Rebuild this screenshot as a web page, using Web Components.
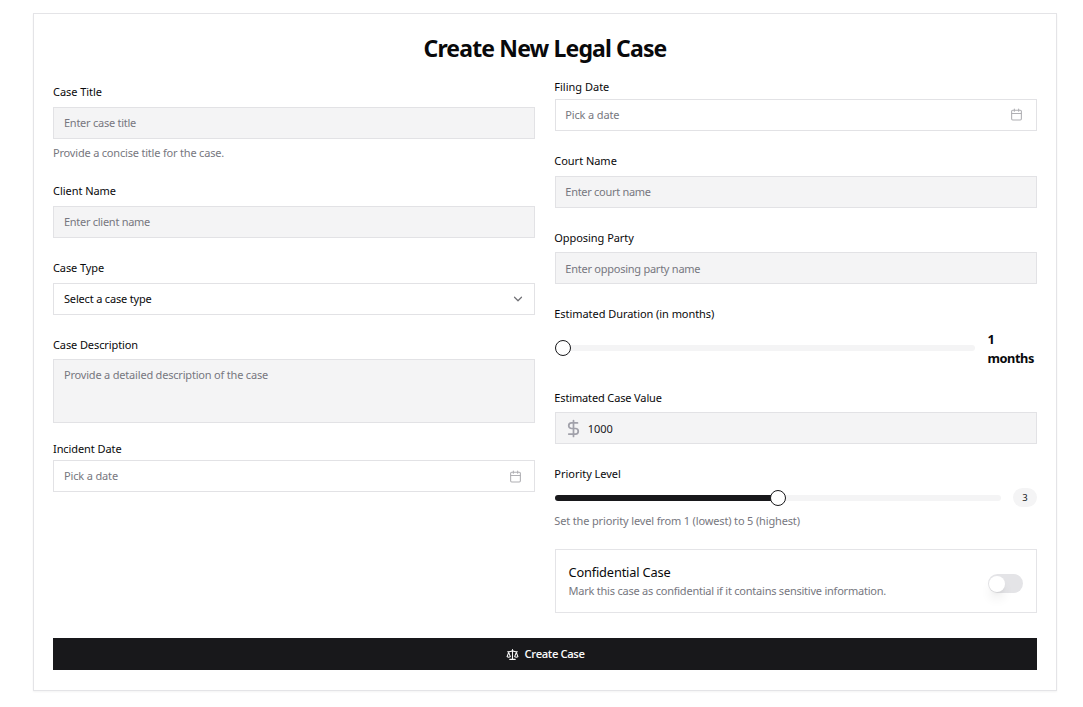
<!DOCTYPE html>
<html lang="en">
<head>
<meta charset="utf-8">
<title>Create New Legal Case</title>
<style>
html,body{margin:0;background:#fff}
body{font:11px/16px "Noto Sans","Open Sans",sans-serif;color:#09090b;height:707px;overflow:hidden}
</style>
</head>
<body>
<legal-case-page></legal-case-page>
<script>
const define=(name,html,setup)=>{
  const t=document.createElement('template');
  t.innerHTML=html;
  customElements.define(name,class extends HTMLElement{
    connectedCallback(){
      if(this.shadowRoot)return;
      this.attachShadow({mode:'open'}).append(t.content.cloneNode(true));
      if(setup)setup(this,this.shadowRoot);
    }
  });
};

/* One line of text, tracked to the advance width given in "w". */
define('fit-text',`<style>:host{display:inline-block;white-space:nowrap}span{display:inline-block}</style><span><slot></slot></span>`,(el,root)=>{
  const s=root.querySelector('span'),n=el.textContent.length;
  const w=s.getBoundingClientRect().width;
  s.style.letterSpacing=((+el.getAttribute('w')-w)/n).toFixed(4)+'px';
});

const paths={
  calendar:['<path d="M8 2v4M16 2v4"/><rect width="18" height="18" x="3" y="4" rx="2"/><path d="M3 10h18"/>',2],
  chevron:['<path d="m5 8.500 7 7 7-7"/>',2.4],
  dollar:['<path d="M12 2v20M17 5H9.500a3.500 3.500 0 0 0 0 7h5a3.500 3.500 0 0 1 0 7H6"/>',2.2],
  scale:['<path d="m16 16 3-8 3 8c-.87.65-1.920 1-3 1s-2.130-.35-3-1Z"/><path d="m2 16 3-8 3 8c-.87.65-1.920 1-3 1s-2.130-.35-3-1Z"/><path d="M7 21h10M12 3v18M3 7h2c2 0 5-1 7-2 2 1 5 2 7 2h2"/>',2]
};
define('ui-icon',`<style>:host{display:block;flex:none}svg{display:block;width:100%;height:100%}</style><svg viewBox="0 0 24 24" fill="none" stroke="currentColor" stroke-linecap="round" stroke-linejoin="round"></svg>`,(el,root)=>{
  const [d,w]=paths[el.getAttribute('name')],s=root.querySelector('svg');
  s.setAttribute('stroke-width',w);s.innerHTML=d;
});

define('form-field',`<style>
:host{display:block;margin-top:var(--top,22px)}
.label{height:16px;margin-bottom:var(--gap,7px);margin-left:var(--nudge,0px)}
.help{display:block;color:#777780;margin-left:var(--nudge,0px)}
::slotted([slot=help]){display:block!important;height:16px;margin-top:6px}
</style><div class="label"><slot name="label"></slot></div><slot></slot><div class="help"><slot name="help"></slot></div>`);

define('input-box',`<style>
:host{display:flex;align-items:center;justify-content:space-between;box-sizing:border-box;height:32px;border:1px solid #e2e2e5;padding:0 10px 0 calc(10px + var(--nudge,0px));background:#f4f4f5;color:#777780}
:host([plain]){background:#fff}
:host([dark]){color:#09090b}
:host([money]){justify-content:flex-start;gap:6px;color:#18181b}
:host([area]){height:64px;align-items:flex-start;padding-top:7px}
</style><slot></slot>`);

define('range-slider',`<style>
:host{display:flex;align-items:center;flex:1;height:16px}
.track{position:relative;flex:1;height:6px;border-radius:3px;background:#f4f4f5}
.fill{height:6px;border-radius:3px;background:#18181b;width:var(--at)}
.thumb{position:absolute;top:-5px;left:calc(var(--at) - var(--shift));width:16px;height:16px;box-sizing:border-box;border:1px solid #18181b;border-radius:50%;background:#fff}
</style><div class="track"><div class="fill"></div><div class="thumb"></div></div>`);

define('toggle-switch',`<style>
:host{display:flex;align-items:center;box-sizing:border-box;width:35px;height:19px;border-radius:10px;background:#e4e4e7;padding:1px}
i{width:16px;height:16px;border-radius:50%;background:#fff;box-shadow:0 8px 12px -2px #0000001a,0 3px 5px -3px #0000001a}
</style><i></i>`);

define('legal-case-page',`<style>
:host{display:block;padding:13px 26px 0 33px}
.card{box-sizing:border-box;width:1024px;height:678px;border:1px solid #e4e4e7;box-shadow:0 1px 2px #0000000d;padding:18px 19px 0;background:#fff}
h1{margin:0;height:32px;font:700 23px/33px "Noto Sans","Open Sans",sans-serif;text-align:center}
.cols{display:grid;grid-template-columns:482px 482px;gap:20px;margin-top:15px;height:534px}
.right{--nudge:-.7px}
.cal{width:13px;height:13px;color:#b0b0b4;margin-right:2px}
.right .cal{margin:0 3px 2px 0}
.chev{width:12px;height:12px;color:#707075}
.row{display:flex;align-items:center}
.months{width:49px;margin-left:13px;font:700 12.800px/19px "Noto Sans","Open Sans",sans-serif;padding-top:1px;margin-bottom:-1px}
.months fit-text{margin-left:-.5px}
.badge{display:flex;align-items:center;justify-content:center;width:24px;height:19px;margin-left:12px;border-radius:10px;background:#f4f4f5;font-size:9.500px;color:#18181b}
.conf{display:flex;align-items:center;justify-content:space-between;box-sizing:border-box;height:64px;margin-top:21px;border:1px solid #e4e4e7;padding:0 13px 0 12.500px}
.conf>div{display:grid}
.conf .t{font-size:12.800px;height:19px;line-height:18px}
.conf .d{color:#777780;height:17px;line-height:18px}
toggle-switch{margin-top:5px}
.btn{display:flex;align-items:center;justify-content:center;gap:6px;height:32px;margin-top:25px;background:#18181b;color:#fafafa;font:600 11.200px/16px "Open Sans",sans-serif}
</style>
<div class="card">
<h1><fit-text w="243">Create New Legal Case</fit-text></h1>
<div class="cols">
<div>
<form-field style="--top:5px"><fit-text slot="label" w="49">Case Title</fit-text><input-box><fit-text w="72">Enter case title</fit-text></input-box><fit-text slot="help" w="171">Provide a concise title for the case.</fit-text></form-field>
<form-field><fit-text slot="label" w="63">Client Name</fit-text><input-box><fit-text w="86">Enter client name</fit-text></input-box></form-field>
<form-field><fit-text slot="label" w="51">Case Type</fit-text><input-box plain dark><fit-text w="87.5">Select a case type</fit-text><ui-icon class="chev" name="chevron"></ui-icon></input-box></form-field>
<form-field style="--gap:6px"><fit-text slot="label" w="85">Case Description</fit-text><input-box area><fit-text w="204">Provide a detailed description of the case</fit-text></input-box></form-field>
<form-field style="--top:18px;--gap:3px"><fit-text slot="label" w="68.500">Incident Date</fit-text><input-box plain><fit-text w="54">Pick a date</fit-text><ui-icon class="cal" name="calendar"></ui-icon></input-box></form-field>
</div>
<div class="right">
<form-field style="--top:0px;--gap:4px"><fit-text slot="label" w="55">Filing Date</fit-text><input-box plain><fit-text w="54">Pick a date</fit-text><ui-icon class="cal" name="calendar"></ui-icon></input-box></form-field>
<form-field><fit-text slot="label" w="62.5">Court Name</fit-text><input-box><fit-text w="85.5">Enter court name</fit-text></input-box></form-field>
<form-field style="--gap:6px"><fit-text slot="label" w="79.5">Opposing Party</fit-text><input-box><fit-text w="135" style="padding-top:2px">Enter opposing party name</fit-text></input-box></form-field>
<form-field style="--gap:7px"><fit-text slot="label" w="160">Estimated Duration (in months)</fit-text><div class="row"><range-slider style="--at:0%;--shift:0px"></range-slider><div class="months"><fit-text w="7">1</fit-text><br><fit-text w="46.500">months</fit-text></div></div></form-field>
<form-field style="--gap:6px;--top:23px"><fit-text slot="label" w="107.500">Estimated Case Value</fit-text><input-box money><ui-icon name="dollar" style="width:19px;height:19px;color:#a1a1aa;margin-left:-1.500px"></ui-icon><fit-text w="25" style="padding-top:2px;margin-left:-1px">1000</fit-text></input-box></form-field>
<form-field style="--gap:6px"><fit-text slot="label" w="66.500">Priority Level</fit-text><div class="row"><range-slider style="--at:50%;--shift:8px"></range-slider><div class="badge">3</div></div><fit-text slot="help" w="245.500" style="margin-top:6px">Set the priority level from 1 (lowest) to 5 (highest)</fit-text></form-field>
<div class="conf" style="margin-top:20px"><div><fit-text class="t" w="102">Confidential Case</fit-text><fit-text class="d" w="317.500">Mark this case as confidential if it contains sensitive information.</fit-text></div><toggle-switch></toggle-switch></div>
</div>
</div>
<div class="btn"><ui-icon name="scale" style="width:13px;height:13px"></ui-icon><fit-text w="60">Create Case</fit-text></div>
</div>`);
</script>
</body>
</html>
